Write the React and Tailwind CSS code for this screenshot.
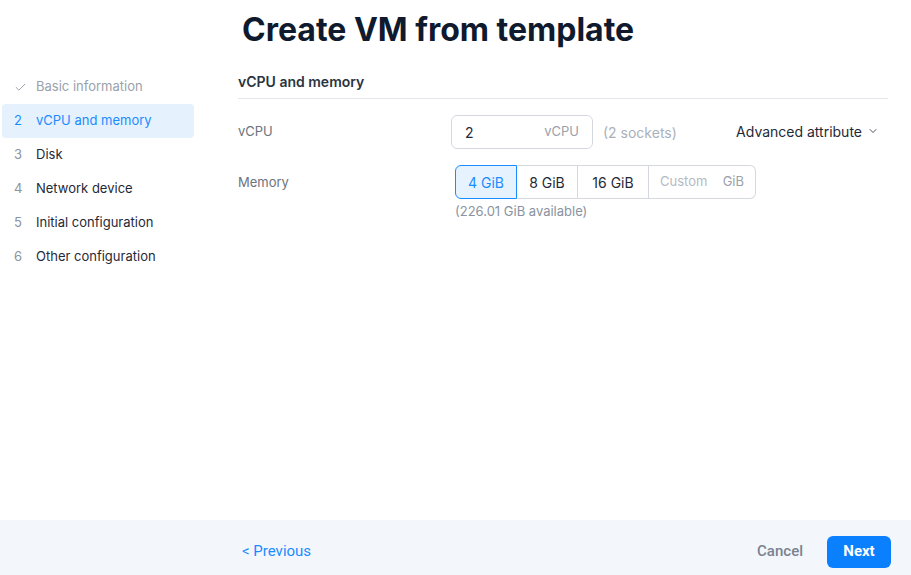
import { Check, ChevronDown } from "lucide-react";

const steps = [
  { n: "✓", label: "Basic information", state: "done" },
  { n: "2", label: "vCPU and memory", state: "active" },
  { n: "3", label: "Disk" },
  { n: "4", label: "Network device" },
  { n: "5", label: "Initial configuration" },
  { n: "6", label: "Other configuration" },
];

const sizes = ["4 GiB", "8 GiB", "16 GiB"];

export default function App() {
  return (
    <div className="w-[911px] h-[575px] bg-white flex flex-col font-['Inter',sans-serif] text-[#1f2937] overflow-hidden">
      <div className="flex-1 flex flex-col">
        <div className="h-[68px] pl-[242px] pt-[8px]">
          <h1 className="text-[32px] font-bold text-[#0f1a2e] leading-[44px] tracking-[0px]">Create VM from template</h1>
        </div>
        <div className="flex">
          <div className="w-[196px] pl-[2px] pt-[2px] flex flex-col">
            {steps.map((s) => (
              <div
                key={s.label}
                className={
                  "h-[34px] flex items-center rounded text-[13px] w-[192px] " +
                  (s.state === "active" ? "bg-[#e5f1fd] text-[#1a8cff]" : "")
                }
              >
                <span className={"w-[34px] pl-[12px] " + (s.state === "active" ? "text-[#1a8cff]" : "text-[#8a93a0]")}>
                  {s.state === "done" ? <Check size={13} strokeWidth={1.6} className="text-[#8a93a0]" /> : s.n}
                </span>
                <span className={s.state === "done" ? "text-[#9aa1ab]" : s.state === "active" ? "text-[#1a8cff]" : "text-[#1f2937]"}>
                  {s.label}
                </span>
              </div>
            ))}
          </div>
          <div className="ml-[42px] w-[650px]">
            <div className="h-[31px] border-b border-[#e3e6ea] text-[14px] font-semibold text-[#2b3441] pt-[3px]">vCPU and memory</div>
            <div className="flex items-center mt-[16px] h-[34px]">
              <div className="w-[213px] text-[13px] text-[#6b7380]">vCPU</div>
              <div className="w-[142px] h-[34px] border border-[#d5d9df] rounded-md flex items-center justify-between px-[13px] text-[14px]">
                <span className="text-[#1f2937]">2</span>
                <span className="text-[#9aa1ab] text-[13px]">vCPU</span>
              </div>
              <span className="ml-[10px] text-[14px] text-[#aab1bb]">(2 sockets)</span>
              <div className="ml-auto mr-[9px] flex items-center gap-[5px] text-[14px] text-[#1f2937] -mt-[2px]">
                Advanced attribute <ChevronDown size={12} strokeWidth={1.6} />
              </div>
            </div>
            <div className="flex mt-[16px]">
              <div className="w-[217px] text-[13px] text-[#6b7380] pt-[8px]">Memory</div>
              <div className="flex flex-col">
                <div className="flex h-[34px] text-[14px]">
                  {sizes.map((s, i) => (
                    <div
                      key={s}
                      className={
                        "flex items-center justify-center border " +
                        (i === 0
                          ? "w-[62px] rounded-l-md bg-[#e6f2fe] border-[#1a8cff] text-[#1a8cff]"
                          : "border-[#d5d9df] border-l-0 text-[#1f2937] " + (i === 1 ? "w-[61px]" : "w-[71px]"))
                      }
                    >
                      {s}
                    </div>
                  ))}
                  <div className="w-[107px] border border-l-0 border-[#d5d9df] rounded-r-md flex items-center justify-between px-[11px] text-[13px] text-[#b4bac3]">
                    <span>Custom</span>
                    <span className="text-[#9aa1ab]">GiB</span>
                  </div>
                </div>
                <div className="text-[13px] text-[#8a93a0] mt-[3px]">(226.01 GiB available)</div>
              </div>
            </div>
          </div>
        </div>
      </div>
      <div className="h-[55px] bg-[#f3f6fa] flex items-center pl-[242px] pr-[20px] pt-[8px] font-['Roboto',sans-serif]">
        <span className="text-[15px] text-[#1a8cff]">&lt; Previous</span>
        <span className="ml-auto text-[15px] font-medium text-[#7a8390]">Cancel</span>
        <button className="ml-[24px] w-[64px] h-[32px] rounded-md bg-[#0a80ff] text-white text-[15px] font-bold">Next</button>
      </div>
    </div>
  );
}
